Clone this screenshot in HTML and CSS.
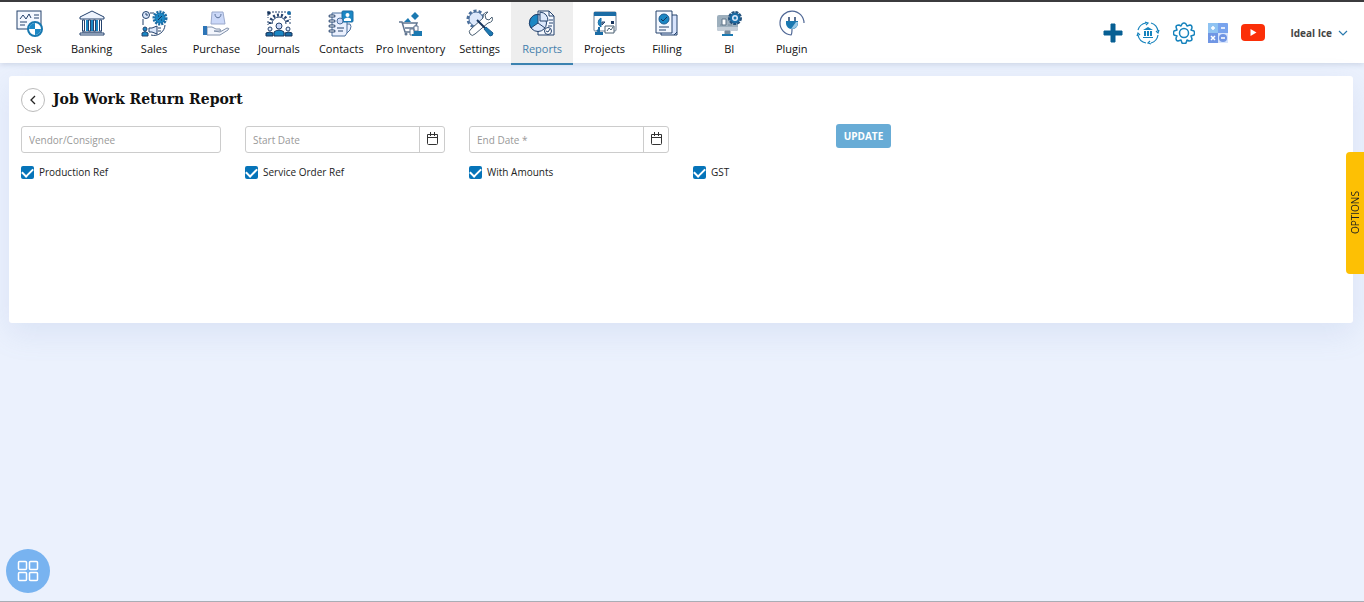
FILE: index.html
```html
<!DOCTYPE html>
<html lang="en">
<head>
<meta charset="utf-8">
<meta name="viewport" content="width=device-width, initial-scale=1">
<title>Job Work Return Report</title>
<link rel="stylesheet" href="styles.css">
</head>
<body>
<header class="topbar">
  <nav class="menu" aria-label="Main">
    <a class="menu-item" href="#"><svg class="menu-icon" viewBox="0 0 28 28"><rect x="2" y="2" width="24" height="18" fill="#f4f8ff" stroke="#24426d"/><path d="M5 10l3-4 3 4 3-5 2 4M5 13h7M5 16h5M19 6h5M19 9h5" fill="none" stroke="#24426d"/><circle cx="20" cy="20" r="7" fill="#fff" stroke="#1778b0" stroke-width="2"/><path d="M20 20v-6a6 6 0 0 0-6 6zM20 20v6a6 6 0 0 0 6-6z" fill="#1b87c4"/></svg><span>Desk</span></a>
    <a class="menu-item" href="#"><svg class="menu-icon" viewBox="0 0 28 28"><path d="M14 2L2 8v2h24V8zM2 26h24v-2H2zM4 23h20" fill="#eef4fe" stroke="#24426d"/><path d="M4.500 11h2v11h-2zM10.500 11h2v11h-2zM15.500 11h2v11h-2zM21.500 11h2v11h-2z" fill="#fff" stroke="#24426d"/><path d="M13 11h2v11h-2zM8 11h2v11H8zM18 11h2v11h-2z" fill="#1b87c4"/></svg><span>Banking</span></a>
    <a class="menu-item" href="#"><svg class="menu-icon" viewBox="0 0 28 28"><path d="M10 4h4M3 10v6M25 16a11 11 0 0 1-14 10" fill="none" stroke="#24426d"/><circle cx="6" cy="6" r="3.500" fill="#dce8fb" stroke="#24426d"/><path d="M6 4v2h2" fill="none" stroke="#24426d"/><circle cx="20" cy="9" r="5.500" fill="#1b87c4"/><circle cx="20" cy="9" r="6" fill="none" stroke="#1b6ca5" stroke-width="3" stroke-dasharray="2 1"/><path d="M18 11l4-4M18 7h1M21 11h1" stroke="#16345c"/><circle cx="5" cy="20" r="2" fill="#1b87c4" stroke="#24426d"/><path d="M2 27v-3q3-3 6 0v3z" fill="#1b87c4" stroke="#24426d"/><path d="M9 19h3l5-2v8l-5-2H9zM18 19h3M18 22h3" fill="#dce8fb" stroke="#24426d"/></svg><span>Sales</span></a>
    <a class="menu-item" href="#"><svg class="menu-icon" viewBox="0 0 28 28"><path d="M10 3h11l2 12H9z" fill="#cbd8f8" stroke="#9aa9cc"/><path d="M13 5c0 5 6 5 6 0" fill="none" stroke="#5c7299"/><path d="M5 18h5l4 2h4q2 2-1 2h-5l6 1 7-4q3 0 1 2l-8 5H5z" fill="#f3f6fd" stroke="#8090aa"/><path d="M1 17h4v9H1z" fill="#2d75b7"/></svg><span>Purchase</span></a>
    <a class="menu-item" href="#"><svg class="menu-icon" viewBox="0 0 28 28"><path d="M7 15a7 7 0 0 1 14 0" fill="none" stroke="#24426d"/><path d="M5 15a9 9 0 0 1 18 0" fill="none" stroke="#24426d" stroke-width="3" stroke-dasharray="2 2"/><path d="M3 2v7M7 3h14M25 4v7M3 12v4M25 13v3" stroke="#24426d" stroke-dasharray="2 1"/><circle cx="4" cy="4" r="1.800" fill="#16345c"/><circle cx="24" cy="4" r="2" fill="#1b6ca5"/><circle cx="14" cy="17" r="3" fill="#cbd8f8" stroke="#24426d"/><path d="M9 27v-4q5-4 10 0v4z" fill="#1b87c4" stroke="#16345c"/><circle cx="5" cy="20" r="2" fill="#dce8fb" stroke="#24426d"/><circle cx="23" cy="20" r="2" fill="#dce8fb" stroke="#24426d"/><path d="M1 27v-3q4-2 7 0v3zM20 27v-3q4-2 7 0v3z" fill="#1b6ca5" stroke="#16345c"/></svg><span>Journals</span></a>
    <a class="menu-item" href="#"><svg class="menu-icon" viewBox="0 0 28 28"><path d="M5 4h15v20l-2 3H5zM20 15h3q2 2 0 6l-3 3" fill="#eaf0fe" stroke="#4b6f9c"/><path d="M3 7h4M3 12h4M3 17h4M3 22h4" stroke="#24426d" stroke-width="3" stroke-linecap="round"/><path d="M3 7h4M3 12h4M3 17h4M3 22h4" stroke="#fff" stroke-linecap="round"/><rect x="15" y="2" width="11" height="11" rx="1" fill="#1b87c4" stroke="#1b6ca5"/><circle cx="20.500" cy="6" r="2" fill="#fff"/><path d="M17 12v-2q4-3 7 0v2z" fill="#fff"/><circle cx="13" cy="12" r="3" fill="#cbd8f8" stroke="#4b6f9c"/><path d="M10 19h7M11 22h5" stroke="#24426d"/></svg><span>Contacts</span></a>
    <a class="menu-item" href="#"><svg class="menu-icon" viewBox="0 0 28 28"><path d="M18 3l4 4-4 4-4-4z" fill="#1b79b1"/><path d="M7 13l4-4 3 4z" fill="#1b79b1"/><path d="M2 13h3l3 10h9M6 14h14l-2 5H8" fill="none" stroke="#607590" stroke-width="1.500"/><path d="M17 17h4v5h-4zM13 20h4v6h-4z" fill="#fff" stroke="#607590"/><path d="M17 22h8v5h-8z" fill="#1b79b1"/><circle cx="9" cy="25" r="1.500" fill="#607590"/><path d="M15 25h2v2h-2z" fill="#1b79b1"/></svg><span>Pro Inventory</span></a>
    <a class="menu-item" href="#"><svg class="menu-icon" viewBox="0 0 28 28"><circle cx="10" cy="10" r="8" fill="none" stroke="#4b6f9c" stroke-width="3" stroke-dasharray="3 2"/><circle cx="10" cy="10" r="7" fill="#dce8fb" stroke="#4b6f9c"/><path d="M22 3l-3 3 1 4 3 1 3-3q2 5-4 6L9 25q-3 3-5 0t1-5l12-11q0-6 5-6z" fill="#fff" stroke="#4b6073"/><path d="M11 11l8 8" stroke="#16345c" stroke-width="2"/><path d="M18 20l2-2 7 6q0 3-3 3z" fill="#1b79b1" stroke="#1b5c91"/></svg><span>Settings</span></a>
    <a class="menu-item is-active" href="#" aria-current="page"><svg class="menu-icon" viewBox="0 0 28 28"><path d="M10 2h11l5 5v19H10z" fill="#f4f8ff" stroke="#24426d"/><path d="M21 2v5h5M21 11h4M21 14h4M20 17h4" fill="none" stroke="#24426d"/><circle cx="10" cy="14" r="8.500" fill="#dce8fb" stroke="#24426d"/><path d="M10 14V5.500a8.500 8.500 0 0 0-7 13.500z" fill="#1b87c4" stroke="#24426d"/><path d="M12 12V3q8 1 8 9z" fill="#dce8fb" stroke="#24426d"/><path d="M10 14l7 5" stroke="#24426d"/><circle cx="20" cy="22" r="3.500" fill="#fff" stroke="#24426d"/><path d="M18 22l2 1 2-3" fill="none" stroke="#24426d"/></svg><span>Reports</span></a>
    <a class="menu-item" href="#"><svg class="menu-icon" viewBox="0 0 28 28"><rect x="3" y="3" width="22" height="19" rx="1" fill="#fff" stroke="#6c7f94"/><path d="M3 3h22v4H3z" fill="#1b6ca5"/><path d="M10 9a5 5 0 0 0 0 9z" fill="#1b87c4" stroke="#1b6ca5"/><path d="M11 13h3l-3 3z" fill="#9ab4cc" stroke="#24426d"/><path d="M20 12h3v3h-3z" fill="#16345c"/><path d="M14 17h9v7h-9z" fill="#fff" stroke="#4b6073"/><path d="M16 22l2-3 2 2 2-3" fill="none" stroke="#4b6073"/><path d="M8 18v5M6 21l2 2" stroke="#1b6ca5" stroke-width="2"/><path d="M4 23h8v3H4z" fill="#1b6ca5"/></svg><span>Projects</span></a>
    <a class="menu-item" href="#"><svg class="menu-icon" viewBox="0 0 28 28"><path d="M8 6h16v20H8z" fill="#d8e4fc" stroke="#24426d"/><path d="M3 2h16v22H3z" fill="#f4f8ff" stroke="#24426d"/><circle cx="11" cy="10" r="5" fill="#1b87c4" stroke="#1b5c91"/><path d="M8 10l2 2 4-4" fill="none" stroke="#16345c"/><path d="M6 18h10M6 21h7M21 26l3-3" stroke="#24426d"/></svg><span>Filling</span></a>
    <a class="menu-item" href="#"><svg class="menu-icon" viewBox="0 0 28 28"><rect x="2" y="6" width="21" height="16" rx="2" fill="#9dafbd"/><path d="M2 18h21v2q0 2-2 2H4q-2 0-2-2z" fill="#c4ced8"/><path d="M7 10h4v6H7z" fill="#fff" stroke="#5e7589"/><path d="M5 16h3M13 16h4M10 22h5v3h-5z" stroke="#77899a" fill="#77899a"/><path d="M7 25h11v2H7z" fill="#1b79b1"/><circle cx="20" cy="9" r="5.500" fill="#1b6ca5"/><circle cx="20" cy="9" r="6" fill="none" stroke="#24527d" stroke-width="2" stroke-dasharray="3 1"/><circle cx="20" cy="9" r="3" fill="#dce8fb"/><circle cx="20" cy="9" r="1.500" fill="#1b79b1"/></svg><span>BI</span></a>
    <a class="menu-item" href="#"><svg class="menu-icon" viewBox="0 0 28 28"><path d="M26 14A12 12 0 1 0 13 26q1-1 1-6" fill="none" stroke="#4f6795" stroke-width="1.200"/><path d="M8 12h12v3q-1 5-6 5t-6-5z" fill="#1b79b1"/><path d="M11 8v4M17 8v4" stroke="#24426d" stroke-width="1.500"/><path d="M18 13l-5 7q7 0 7-7z" fill="#9ac8e5"/></svg><span>Plugin</span></a>
  </nav>
  <div class="tools">
    <button class="tool" type="button" aria-label="Add"><svg width="20" height="20" viewBox="0 0 20 20"><path d="M8 1h4v7h7v4h-7v7H8v-7H1V8h7z" fill="#075f93" stroke="#075f93" stroke-linejoin="round"/></svg></button>
    <button class="tool" type="button" aria-label="Bank sync"><svg width="24" height="24" viewBox="0 0 24 24" fill="none" stroke="#1683bd" stroke-width="1.200"><path d="M2 9a10 10 0 0 1 8-7M15 2a10 10 0 0 1 7 8M22 14a10 10 0 0 1-7 8M10 22a10 10 0 0 1-8-8M9 1l3 1-2 2M23 9l-1 3-2-2M15 23l-3-1 2-2M1 15l1-3 2 2"/><path d="M12 6l5 3H7zM7 16h10v1H7z" fill="#1683bd" stroke="none"/><path d="M9 10v5M12 10v5M15 10v5" stroke-width="2"/></svg></button>
    <button class="tool" type="button" aria-label="Preferences"><svg width="22" height="22" viewBox="1 1 22 22" fill="none" stroke="#1683bd" stroke-width="1.500" stroke-linejoin="round"><path d="M10 3q2-2 4 0l1 2 3-1q2 0 2 3l-1 2 3 1q1 2 0 4l-3 1 1 3q0 2-3 2l-2-1-1 3q-2 1-4 0l-1-3-3 1q-2 0-2-3l1-2-3-1q-1-2 0-4l3-1-1-3q0-2 3-2l2 1z"/><circle cx="12" cy="12" r="4.500"/></svg></button>
    <button class="tool" type="button" aria-label="Calculator"><svg width="20" height="20" viewBox="0 0 20 20"><rect width="20" height="20" rx="1" fill="#78a3ed"/><path d="M0 0h10v10H0z" fill="#8fc3f2"/><path d="M0 10h10v10H0z" fill="#7096e4"/><path d="M10 10h10v10H10z" fill="#d8e5fc"/><circle cx="15" cy="15" r="4" fill="#7095e3"/><path d="M5 3v4M3 5h4M13 5h4M3 13l4 4M7 13l-4 4M13 15h4" stroke="#fff" stroke-width="1.500"/></svg></button>
    <button class="tool" type="button" aria-label="Video help"><svg width="24" height="18" viewBox="0 0 24 18"><rect width="24" height="17" rx="4" fill="#fb2f08"/><path d="M9.500 5v7l6-3.500z" fill="#fff"/></svg></button>
  </div>
  <button class="account" type="button"><span>Ideal Ice</span><svg width="10" height="8" viewBox="0 0 10 8"><path d="M1 2l4 4 4-4" fill="none" stroke="#2b7aae" stroke-width="1.200"/></svg></button>
</header>

<main class="page">
  <section class="card">
    <div class="heading">
      <button class="back" type="button" aria-label="Back"><svg width="8" height="12" viewBox="0 0 8 12"><path d="M6 2L2 6l4 4" fill="none" stroke="#222" stroke-width="1.300"/></svg></button>
      <h1 class="title">Job Work Return Report</h1>
    </div>
    <form class="filters">
      <input class="field" type="text" aria-label="Vendor/Consignee" placeholder="Vendor/Consignee">
      <div class="date">
        <input class="date-input" type="text" aria-label="Start Date" placeholder="Start Date">
        <button class="date-button" type="button" aria-label="Choose start date"><svg width="13" height="14" viewBox="0 0 13 14"><path d="M1.500 2.500h10v9q0 1-1 1h-8q-1 0-1-1zM1.500 5.500h10M4.500 0v4M8.500 0v4" fill="none" stroke="#333"/></svg></button>
      </div>
      <div class="date">
        <input class="date-input" type="text" aria-label="End Date" placeholder="End Date *">
        <button class="date-button" type="button" aria-label="Choose end date"><svg width="13" height="14" viewBox="0 0 13 14"><path d="M1.500 2.500h10v9q0 1-1 1h-8q-1 0-1-1zM1.500 5.500h10M4.500 0v4M8.500 0v4" fill="none" stroke="#333"/></svg></button>
      </div>
      <button class="update" type="button">UPDATE</button>
      <label class="check"><input type="checkbox" checked>Production Ref</label>
      <label class="check"><input type="checkbox" checked>Service Order Ref</label>
      <label class="check"><input type="checkbox" checked>With Amounts</label>
      <label class="check"><input type="checkbox" checked>GST</label>
    </form>
  </section>
</main>

<button class="options" type="button">OPTIONS</button>
<button class="launcher" type="button" aria-label="Apps"><svg width="22" height="22" viewBox="0 0 22 22" fill="none" stroke="#fff" stroke-width="1.500"><rect x="1.500" y="1.500" width="8" height="8" rx="1"/><rect x="12.500" y="1.500" width="8" height="8" rx="1"/><rect x="1.500" y="12.500" width="8" height="8" rx="1"/><rect x="12.500" y="12.500" width="8" height="8" rx="1"/></svg></button>
</body>
</html>
```
FILE: styles.css
```css
* { box-sizing: border-box; }

body {
  margin: 0;
  min-height: 100vh;
  background: #ebf1fd;
  border-bottom: 1px solid #a9adb5;
  font-family: "Open Sans", sans-serif;
  font-size: 10px;
  color: #222;
}

button { border: 0; padding: 0; background: none; font: inherit; color: inherit; cursor: pointer; }
svg { display: block; }

.topbar {
  display: flex;
  align-items: stretch;
  height: 63px;
  background: #fff;
  border-top: 2px solid #3b3b3d;
  box-shadow: 0 1px 6px rgba(60, 80, 120, 0.2);
}

.menu {
  display: grid;
  grid-template-columns: repeat(6, 1fr) 76px repeat(6, 1fr);
  flex: 0 0 825px;
  margin-left: -2px;
}

.menu-item {
  display: flex;
  flex-direction: column;
  align-items: center;
  gap: 4px;
  height: 63px;
  padding-top: 7px;
  border-bottom: 2px solid transparent;
  font-size: 11px;
  line-height: 16px;
  white-space: nowrap;
  color: #111;
  text-decoration: none;
}

.menu-item.is-active { background: #eee; border-color: #3b82b0; color: #4580ac; }
.menu-icon { width: 28px; height: 28px; }

.tools { display: flex; align-items: center; gap: 13px; margin-left: auto; }

.account {
  display: flex;
  align-items: center;
  gap: 6px;
  margin: 0 16px 0 25px;
  font-weight: 700;
  color: #444;
}

.page { padding: 13px 11px 24px 9px; }

.card {
  min-height: 247px;
  padding: 12px;
  background: #fff;
  border-radius: 3px;
  box-shadow: 0 10px 30px rgba(120, 150, 200, 0.15);
}

.heading { display: flex; align-items: center; gap: 8px; margin-bottom: 14px; }

.back {
  display: grid;
  place-items: center;
  width: 24px;
  height: 24px;
  border: 1px solid #bbb;
  border-radius: 50%;
}

.title {
  margin: 0;
  padding-bottom: 2px;
  font-family: "DejaVu Serif", serif;
  font-size: 14px;
  line-height: 22px;
  font-weight: 700;
  color: #111;
}

.filters { display: grid; grid-template-columns: repeat(4, 200px); gap: 13px 24px; }

.field, .date {
  width: 100%;
  height: 27px;
  border: 1px solid #ccc;
  border-radius: 3px;
  background: #fff;
}

.field, .date-input { padding: 0 7px; font: inherit; color: #222; }
.date { display: flex; }
.date-input { flex: 1; min-width: 0; border: 0; background: none; }
.field::placeholder, .date-input::placeholder { color: #999; opacity: 1; }
.date-button { display: grid; place-items: center; width: 25px; padding-bottom: 2px; border-left: 1px solid #ccc; }

.update {
  justify-self: end;
  width: 55px;
  height: 24px;
  margin: -2px 2px 0 0;
  border-radius: 3px;
  background: #68acd6;
  font-weight: 700;
  color: #fff;
}

.check { display: flex; align-items: center; gap: 5px; line-height: 13px; }

.check input {
  appearance: none;
  width: 13px;
  height: 13px;
  margin: 0;
  border-radius: 2px;
  background: #0674b9;
  display: grid;
  place-items: center;
}

.check input:checked::before {
  content: "";
  width: 9px;
  height: 5px;
  margin-bottom: 3px;
  border: solid #fff;
  border-width: 0 0 2px 2px;
  transform: rotate(-45deg);
}

.options {
  position: fixed;
  top: 152px;
  right: 0;
  width: 18px;
  height: 122px;
  border-radius: 0 4px 4px 0;
  background: #fdc004;
  writing-mode: vertical-rl;
  rotate: 180deg;
}

.launcher {
  position: fixed;
  left: 6px;
  bottom: 9px;
  display: grid;
  place-items: center;
  width: 44px;
  height: 44px;
  border-radius: 50%;
  background: #78b3f0;
}
```
